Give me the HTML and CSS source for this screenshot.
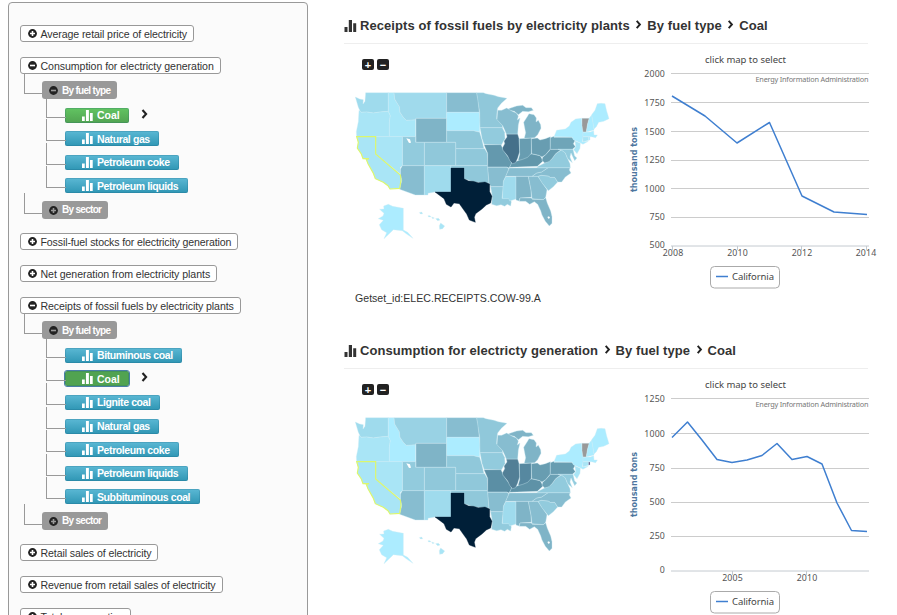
FILE: index.html
```html
<!DOCTYPE html>
<html lang="en">
<head>
<meta charset="utf-8">
<title>Electricity data browser</title>
<link rel="stylesheet" href="styles.css">
</head>
<body>
<svg class="defs" aria-hidden="true">
  <symbol id="plus" viewBox="0 0 9 9"><circle cx="4.5" cy="4.5" r="4.4"/><path class="knock" d="M4.5 2v5M2 4.5h5"/></symbol>
  <symbol id="minus" viewBox="0 0 9 9"><circle cx="4.5" cy="4.5" r="4.4"/><path class="knock" d="M2 4.5h5"/></symbol>
  <symbol id="bars" viewBox="0 0 12 12"><path d="M0 7h3v5H0zM4.3 0h3.2v12H4.3zM8.7 3.2h3V12h-3z"/></symbol>
  <symbol id="chev" viewBox="0 0 6 10"><path class="chev" d="M1 1l3.6 4L1 9"/></symbol>
  <symbol id="states" viewBox="0 0 870 495">
    <g class="st">
      <path class="c2" d="M46 51L59 57 70 59 69 72 75 64 77 38H145V94L120 96 100 99 80 96 62 97 55 82Z"/>
      <path class="c1" d="M57 91L63 97 80 96 100 99 120 96 145 94 151 107 148 125V170H50L49 155 55 125Z"/>
      <path class="id" d="M145 38H162L164 57 178 80 180 97 190 112 199 121 227 119V170H148V125L151 107 145 94Z"/>
      <path class="mt" d="M162 38H320V115H228L227 119 199 121 190 112 180 97 178 80 164 57Z"/>
      <path class="c6" d="M228 115H320V187H228Z"/>
      <path class="c5" d="M320 38H410L415 60 418 97H320Z"/>
      <path class="c0" d="M320 97H418L420 120 419 156 400 152H320Z"/>
      <path class="c4" d="M320 152H400L419 157 426 180 432 206H347V187H320Z"/>
      <path class="c4" d="M347 206H434L442 220 443 257H347Z"/>
      <path class="c4" d="M253 187H347V257H253Z"/>
      <path class="c3" d="M187 170H227V187H253V257H187Z"/>
      <path class="c5" d="M187 257H253V345H226L179 328 185 302 181 284 181 268Z"/>
      <path class="c2" d="M253 257H333V336H285L264 340V345H253Z"/>
      <path class="c4" d="M333 257H443L447 309 425 308 400 305 372 296V264H333Z"/>
      <path class="c4" d="M410 38H430L438 41 462 46 475 50 501 55 484 70 473 84 471 96 470 116 487 136 488 143H420L419 97Z"/>
      <path class="c3" d="M420 143H487L494 157 495 176 484 195 432 193 426 175Z"/>
      <path class="mo" d="M432 194L483 194 490 209 500 225 513 242 515 252 507 264 500 261H443V220Z"/>
      <path class="c5" d="M443 262H500L507 266 498 288 491 302 490 320H453L447 309Z"/>
      <path class="c3" d="M452 320H490L486 355H507L514 365 512 378 502 373 494 379 483 374 470 377 455 373 457 350Z"/>
      <path class="c2" d="M497 290H528V357L509 363 506 356H487L490 305Z"/>
      <path class="c6" d="M528 289H565L573 330 574 352 540 354 537 363 528 360Z"/>
      <path class="c5" d="M565 289H594L608 310 621 329 617 352 610 359 576 356 573 330Z"/>
      <path class="c6" d="M540 354H574L577 358 610 359 617 353 622 370 632 393 636 410V430L628 438 616 424 606 405 602 392 593 373 583 365 569 373 557 364H538Z"/>
      <path class="c3" d="M594 289L604 286 625 288 631 292 644 292 653 306 640 320 625 332 607 310Z"/>
      <path class="c5" d="M624 263H690L688 270 693 279 676 291 665 306H653L644 292 631 292 625 288 604 286 593 289H576L590 279 605 276Z"/>
      <path class="c5" d="M508 264L624 263 605 276 590 279 576 289H497Z"/>
      <path class="ky" d="M509 262L515 248 534 242 548 232 556 223 577 222 601 227 609 243 592 259Z"/>
      <path class="c3" d="M592 260L614 249 627 244 637 235 647 221 664 210 676 218 682 234 690 251 691 263H592Z"/>
      <path class="wv" d="M631 199L632 208H654L663 209 647 221 637 235 627 245 614 249 606 241 608 232 617 224 629 211Z"/>
      <path class="il" d="M499 162H533L537 175 539 215 533 235 527 248 518 251 510 243 503 228 489 211 487 204 494 191 492 183 501 171Z"/>
      <path class="in" d="M538 176L574 174V220L563 232 548 238 534 242 539 224Z"/>
      <path class="oh" d="M574 176L592 174 600 180 616 176 631 170V207L617 224 606 231 597 226 575 221Z"/>
      <path class="pa" d="M631 173L642 169V172H696L705 182 700 191 706 200 697 208H631Z"/>
      <path class="c6" d="M553 175L557 158 553 138 551 127 563 108 567 101 582 104 589 114 588 126 595 121 602 134 603 145 593 164 584 173Z"/>
      <path class="c6" d="M500 89L512 84 530 78 548 76 558 83 574 83 580 91 565 95 548 94 535 104 523 94Z"/>
      <path class="c5" d="M473 91L485 91 500 84 517 94 529 99 535 108 532 120 540 114 535 135 533 162H499L494 150 488 137 471 119Z"/>
      <path class="c0" d="M642 170L650 151 676 147 688 138 693 127 707 117 725 115 726 137 729 155V174L727 185 745 184 729 193 722 189 700 179 696 171Z"/>
      <path class="vt" d="M726 115H748L743 132 739 156H729L726 137Z"/>
      <path class="c0" d="M748 114L755 105 761 137 762 150 739 156 743 132Z"/>
      <path class="c0" d="M755 104L765 91 772 71 783 70 795 71 800 93 807 116 791 124 776 127 769 140 762 147Z"/>
      <path class="c0" d="M729 157L751 156 761 152 762 165 772 165 767 173 754 170H729Z"/>
      <path class="c1" d="M729 171H746V181L729 185Z"/>
      <path class="ri" d="M746 171H750V180H746Z"/>
      <path class="c1" d="M705 183L721 190 720 205 711 221 701 209 707 200Z"/>
      <path class="c3" d="M654 208H699L704 228 711 234 704 242 693 219 690 231 697 248 683 236 676 219 664 210Z"/>
      <path class="c0" d="M119 388L132 387 131 378 145 373 158 379 190 385V450L203 457 219 475 201 463 187 452 160 449 150 459 132 476 140 458 125 449 118 434 130 421 115 416 129 408 132 400Z"/>
      <path class="c1" d="M238 398l7-2 3 5-6 1zM264 407h6l3 3-7 1zM275 411l8 3-5 2zM287 416l8-1 5 5-7 2zM302 429l12 9-6 8-9 2-1-11z"/>
      <path class="c1" d="M50 170H107V222L181 284 185 300 179 325 150 327 144 317 130 307 106 296 100 280 84 251 79 238 69 236 64 222 52 204 55 187Z"/>
      <path class="c1" d="M107 170H187V257L181 262V282L107 222Z"/>
      <path class="tx" d="M333 264H372V296L386 303 400 304 415 308 435 306 449 312V335L456 349 452 369 439 375 426 387 407 401 403 412 406 427 388 420 380 402 367 384 358 371 342 369 333 381 319 373 312 356 285 336H333Z"/>
    </g>
    <path class="lake" d="M199 175L210 178 213 188 207 189Z"/>
    <path class="lake" d="M622 411l5-2 3 4-4 4z"/>
    <path class="picked" d="M50 170H107V222L181 285 183 300 179 325 150 327 144 317 130 307 106 296 100 280 84 251 79 238 87 236 69 236 64 222 52 204 55 187Z"/>
  </symbol>
</svg>

<div class="page">
  <aside class="tree">
    <ul class="roots">
      <li><a class="root"><svg><use href="#plus"/></svg>Average retail price of electricity</a></li>
      <li><a class="root"><svg><use href="#minus"/></svg>Consumption for electricty generation</a>
        <ul class="groups">
          <li><a class="group"><svg><use href="#minus"/></svg>By fuel type</a>
            <ul class="leaves">
              <li><a class="leaf on"><svg><use href="#bars"/></svg>Coal</a><svg class="go"><use href="#chev"/></svg></li>
              <li><a class="leaf"><svg><use href="#bars"/></svg>Natural gas</a></li>
              <li><a class="leaf"><svg><use href="#bars"/></svg>Petroleum coke</a></li>
              <li><a class="leaf"><svg><use href="#bars"/></svg>Petroleum liquids</a></li>
            </ul>
          </li>
          <li><a class="group"><svg><use href="#plus"/></svg>By sector</a></li>
        </ul>
      </li>
      <li><a class="root"><svg><use href="#plus"/></svg>Fossil-fuel stocks for electricity generation</a></li>
      <li><a class="root"><svg><use href="#plus"/></svg>Net generation from electricity plants</a></li>
      <li><a class="root"><svg><use href="#minus"/></svg>Receipts of fossil fuels by electricity plants</a>
        <ul class="groups">
          <li><a class="group"><svg><use href="#minus"/></svg>By fuel type</a>
            <ul class="leaves">
              <li><a class="leaf"><svg><use href="#bars"/></svg>Bituminous coal</a></li>
              <li><a class="leaf on focus"><svg><use href="#bars"/></svg>Coal</a><svg class="go"><use href="#chev"/></svg></li>
              <li><a class="leaf"><svg><use href="#bars"/></svg>Lignite coal</a></li>
              <li><a class="leaf"><svg><use href="#bars"/></svg>Natural gas</a></li>
              <li><a class="leaf"><svg><use href="#bars"/></svg>Petroleum coke</a></li>
              <li><a class="leaf"><svg><use href="#bars"/></svg>Petroleum liquids</a></li>
              <li><a class="leaf"><svg><use href="#bars"/></svg>Subbituminous coal</a></li>
            </ul>
          </li>
          <li><a class="group"><svg><use href="#plus"/></svg>By sector</a></li>
        </ul>
      </li>
      <li><a class="root"><svg><use href="#plus"/></svg>Retail sales of electricity</a></li>
      <li><a class="root"><svg><use href="#plus"/></svg>Revenue from retail sales of electricity</a></li>
      <li><a class="root"><svg><use href="#plus"/></svg>Total consumption</a></li>
    </ul>
  </aside>

  <main>
    <section class="receipts">
      <h2><svg class="bars"><use href="#bars"/></svg><span>Receipts of fossil fuels by electricity plants</span><svg class="sep"><use href="#chev"/></svg><span>By fuel type</span><svg class="sep"><use href="#chev"/></svg><span>Coal</span></h2>
      <div class="body">
        <div class="mapside">
          <div class="zoom"><button>+</button><button>−</button></div>
          <svg class="map"><use href="#states"/></svg>
          <p>Getset_id:ELEC.RECEIPTS.COW-99.A</p>
        </div>
        <svg class="chart" viewBox="620 44 277 256">
          <path class="grid" d="M671 73.5H869M671 102.5H869M671 131.5H869M671 160.5H869M671 188.5H869M671 217.5H869"/>
          <path class="axis" d="M671 246H869M672.5 246v4M737.5 246v4M801.5 246v4M866.5 246v4"/>
          <text class="t" x="705" y="63" textLength="81">click map to select</text>
          <text class="credit" x="755.5" y="82" textLength="113">Energy Information Administration</text>
          <g class="end"><text x="665" y="77">2000</text><text x="665" y="106">1750</text><text x="665" y="135">1500</text><text x="665" y="163">1250</text><text x="665" y="192">1000</text><text x="665" y="220">750</text><text x="665" y="248">500</text></g>
          <g class="mid"><text x="673" y="256">2008</text><text x="737.5" y="256">2010</text><text x="802" y="256">2012</text><text x="866" y="256">2014</text></g>
          <text class="unit" transform="translate(637 192) rotate(-90)" textLength="65" lengthAdjust="spacingAndGlyphs">thousand tons</text>
          <polyline class="line" points="672,96 705,116 737,143 769.5,122.5 802,196 834,212 867,214.5"/>
          <rect class="box" x="710.5" y="266.5" width="69" height="21.5" rx="4"/>
          <path class="line" d="M716 276.5h12"/>
          <text class="t" x="732" y="280" textLength="42">California</text>
        </svg>
      </div>
    </section>

    <section class="consumption">
      <h2><svg class="bars"><use href="#bars"/></svg><span>Consumption for electricty generation</span><svg class="sep"><use href="#chev"/></svg><span>By fuel type</span><svg class="sep"><use href="#chev"/></svg><span>Coal</span></h2>
      <div class="body">
        <div class="mapside">
          <div class="zoom"><button>+</button><button>−</button></div>
          <svg class="map"><use href="#states"/></svg>
        </div>
        <svg class="chart" viewBox="620 44 277 256">
          <path class="grid" d="M671 73.5H869M671 108.5H869M671 143.5H869M671 177.5H869M671 211.5H869"/>
          <path class="axis" d="M671 246H869M732.5 246v4M806.5 246v4"/>
          <text class="t" x="705" y="63" textLength="81">click map to select</text>
          <text class="credit" x="755.5" y="82" textLength="113">Energy Information Administration</text>
          <g class="end"><text x="665" y="77">1250</text><text x="665" y="112">1000</text><text x="665" y="146">750</text><text x="665" y="180">500</text><text x="665" y="214">250</text><text x="665" y="248">0</text></g>
          <g class="mid"><text x="732.5" y="256">2005</text><text x="807" y="256">2010</text></g>
          <text class="unit" transform="translate(637 192) rotate(-90)" textLength="65" lengthAdjust="spacingAndGlyphs">thousand tons</text>
          <polyline class="line" points="672,112.5 687.5,97 702,115 717,134.5 732,137.5 747,135 762,130.5 777,118.5 792,134.5 807,131.5 822,139 837,178 851.5,205.5 867,206.5"/>
          <rect class="box" x="710.5" y="266.5" width="69" height="21.5" rx="4"/>
          <path class="line" d="M716 276.5h12"/>
          <text class="t" x="732" y="280" textLength="42">California</text>
        </svg>
      </div>
    </section>
  </main>
</div>
</body>
</html>
```
FILE: styles.css
```css
* { box-sizing: border-box; }
body { margin: 0; background: #fff; font-family: "Liberation Sans", sans-serif; color: #333; }
ul { list-style: none; margin: 0; padding: 0; }
.defs { position: absolute; width: 0; height: 0; }
.page { display: flex; height: 615px; overflow: hidden; }

/* tree */
.tree { flex: none; width: 300px; height: 640px; margin: 2px 0 0 8px; padding: 22px 11px; background: #fbfbfb; border: 1px solid #999; border-radius: 4px; }
.roots > li { margin-bottom: 15px; }
.tree a { display: flex; align-items: center; width: max-content; white-space: nowrap; }
.root { --knock: #fff; height: 17px; padding: 0 6px 0 7px; border: 1px solid #999; border-radius: 3px; background: #fff; font-size: 10.6px; letter-spacing: -0.1px; }
.roots > li:nth-child(2) .root { letter-spacing: -0.06px; }
.roots > li:nth-child(3) .root { letter-spacing: -0.13px; }
.roots > li:nth-child(4) .root { letter-spacing: -0.06px; }
.root svg { width: 9px; height: 9px; margin-right: 3.5px; fill: #222; }
.knock { stroke: var(--knock); stroke-width: 1.6; fill: none; }
.groups { padding: 7px 0 0 22px; margin-bottom: -0.6px; }
.groups li { position: relative; }
.group { --knock: #999; height: 18px; padding: 0 7px; border-radius: 3px; background: #999; color: #fff; font-size: 10px; font-weight: bold; letter-spacing: -0.7px; }
.group svg { width: 9px; height: 9px; margin: 1px 4px 0 0; fill: #222; }
.leaves { padding: 7.5px 0 0 23px; }
.leaves li { display: flex; height: 23.6px; padding-top: 1px; }
.leaf { height: 15px; padding: 0 9.5px 0 17px; border-radius: 2px; background: linear-gradient(#5bb8d4, #2f96b4); box-shadow: inset 0 0 0 1px rgba(20, 90, 120, 0.2); color: #fff; font-size: 10.5px; font-weight: bold; letter-spacing: -0.4px; }
.leaf svg { width: 11px; height: 11px; margin-right: 4px; fill: #fff; }
.leaf.on { background: linear-gradient(#62c462, #51a351); letter-spacing: -0.05px; }
.leaf.on.focus { background: #51a351; outline: 1px solid #4a7ea8; }
.go { width: 7px; height: 10px; margin: 1px 0 0 12px; }
.chev { fill: none; stroke: #222; stroke-width: 2.1; }
.groups > li::before, .leaves > li::before { content: ""; position: absolute; border: solid #999; border-width: 0 0 1px 1px; }
.groups > li::before { left: -18px; top: -8px; width: 18px; height: 20px; }
.leaves > li::before { left: -19px; top: -11px; width: 19px; height: 21px; }

/* panels */
main { width: 557px; margin-left: 32px; }
section { height: 325px; }
h2 { display: flex; align-items: center; height: 44px; width: 524px; margin: 0 0 0 4px; padding-top: 8px; border-bottom: 1px solid #eee; font-size: 13px; letter-spacing: 0.07px; white-space: nowrap; color: #333; }
.bars { width: 13px; height: 12px; margin-right: 3px; fill: #333; }
.sep { width: 7px; height: 9px; margin: -3px 5px 0 5.5px; }
.body { display: flex; }
.mapside { flex: none; width: 280px; }
.zoom { display: flex; gap: 3px; height: 36px; padding: 15px 0 0 22px; }
.zoom button { width: 12px; height: 11px; padding: 0; border: 0; border-radius: 2px; background: #222; color: #fff; font: bold 11px/10px "Liberation Sans", sans-serif; }
.map { display: block; width: 290px; height: 165px; }
p { margin: 46px 0 0 15px; font-size: 10.6px; line-height: 14px; white-space: nowrap; }
.chart { flex: none; width: 277px; height: 256px; }

.st path { stroke: #cdebf5; stroke-width: 1.1; stroke-linejoin: round; }
.st .tx { fill: #001f38; stroke: #001f38; }
.c0 { fill: #acecff; }
.c1 { fill: #a9e5f6; }
.c2 { fill: #9fdbed; }
.c3 { fill: #92cbdd; }
.c4 { fill: #90c8da; }
.c5 { fill: #87bdd0; }
.c6 { fill: #7fb4c7; }
.vt { fill: #999; }
.id { fill: var(--id); }
.mt { fill: var(--mt); }
.mo { fill: var(--mo); }
.ky { fill: var(--ky); }
.wv { fill: var(--wv); }
.il { fill: var(--il); }
.in { fill: var(--in); }
.oh { fill: var(--oh); }
.pa { fill: var(--pa); }
.ri { fill: var(--ri); }
.receipts { --id: #a9e7f8; --mt: #a0daec; --mo: #6499ae; --ky: #6297ab; --wv: #689db1; --il: #45708a; --in: #689db1; --oh: #689db1; --pa: #6fa5b8; --ri: #acecff; }
.consumption { --id: #acecff; --mt: #99d2e4; --mo: #5b8fa5; --ky: #5e92a7; --wv: #6ba1b5; --il: #527f96; --in: #5688a0; --oh: #689db1; --pa: #689db1; --ri: #547; }
.lake { fill: #fff; }
.picked { fill: none; stroke: #dcf76c; stroke-width: 3.5; }

.grid { stroke: #ccc; fill: none; }
.axis { stroke: #c4cad0; fill: none; }
.chart text { font-family: "Noto Sans", sans-serif; font-size: 9.3px; fill: #555; letter-spacing: 0; }
.chart .t { font-size: 9.5px; fill: #444; }
.chart .credit { font-size: 7.3px; fill: #777; }
.chart .end text, .chart .mid text { font-size: 8.8px; letter-spacing: 0.15px; }
.end { text-anchor: end; }
.mid { text-anchor: middle; }
.chart .unit { font-family: "DejaVu Sans Condensed", "DejaVu Sans", sans-serif; font-size: 9.5px; font-weight: bold; fill: #4d759e; }
.line { fill: none; stroke: #3f7fd0; stroke-width: 1.5; stroke-linejoin: round; }
.box { fill: #fff; stroke: #aaa; }
```
